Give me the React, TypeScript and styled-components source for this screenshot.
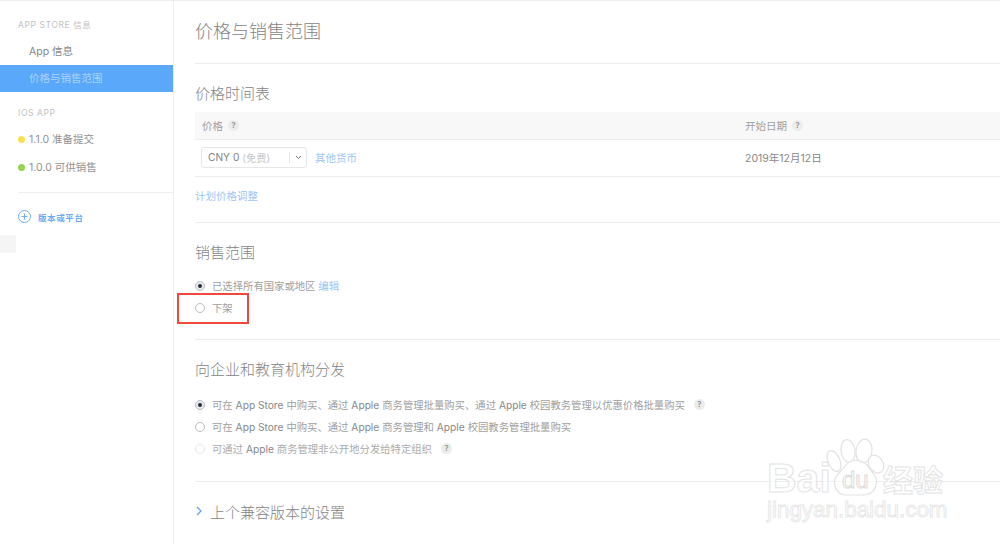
import React from "react";
import styled, { createGlobalStyle } from "styled-components";

const Global = createGlobalStyle`
  html, body { margin: 0; padding: 0; background: #fff; }
  body { font-family: "Inter", "Noto Sans CJK SC", sans-serif; }
  * { box-sizing: border-box; }
`;

const Page = styled.div`
  position: relative;
  width: 1000px;
  height: 544px;
  overflow: hidden;
  display: flex;
  background: #fff;
  border-top: 1px solid #eeeeee;
`;

const TopMark = styled.div`
  position: absolute;
  top: -1px;
  left: 18px;
  width: 50px;
  height: 1px;
  background: #8a8a8a;
`;

const Sidebar = styled.aside`
  position: relative;
  width: 174px;
  flex: none;
  border-right: 1px solid #efefef;
  padding-top: 18px;
`;

const SideLabel = styled.div`
  padding-left: 18px;
  font-size: 8.5px;
  line-height: 12px;
  letter-spacing: 0.6px;
  color: #c2c2c2;
`;

const SideItem = styled.div<{ $active?: boolean }>`
  height: 27px;
  padding: 0 0 2px 29px;
  display: flex;
  align-items: center;
  font-size: 10.5px;
  color: ${(p) => (p.$active ? "#a9d2fd" : "#858585")};
  background: ${(p) => (p.$active ? "#5aa8fa" : "transparent")};
`;

const InfoList = styled.div`
  margin-top: 7px;
  margin-bottom: 15px;
`;

const VersionList = styled.div`
  margin-top: 6px;
`;

const VersionItem = styled.div`
  height: 28px;
  padding: 0 0 2px 18px;
  display: flex;
  align-items: center;
  gap: 4px;
  font-size: 10.5px;
  color: #929292;
`;

const Dot = styled.span<{ $color: string }>`
  width: 7px;
  height: 7px;
  margin-top: 2px;
  border-radius: 50%;
  background: ${(p) => p.$color};
`;

const SideRule = styled.div`
  margin: 11px 0 0 18px;
  height: 1px;
  background: #eeeeee;
`;

const AddRow = styled.div`
  margin: 17px 0 0 18px;
  display: flex;
  align-items: center;
  gap: 7px;
  font-size: 8.5px;
  font-weight: 700;
  letter-spacing: 0.6px;
  color: #6aaaf2;
`;

const Smudge = styled.div`
  position: absolute;
  left: 0;
  top: 234px;
  width: 16px;
  height: 18px;
  background: #f5f5f5;
`;

const Main = styled.main`
  flex: 1;
  padding-left: 21px;
  min-width: 0;
`;

const Title = styled.h1`
  margin: 0;
  height: 63px;
  padding-bottom: 5px;
  display: flex;
  align-items: center;
  font-size: 18px;
  font-weight: 300;
  color: #848484;
  border-bottom: 1px solid #ececec;
`;

const Section = styled.section<{ $height: number }>`
  height: ${(p) => p.$height}px;
  border-bottom: 1px solid #ececec;
`;

const Heading = styled.h2<{ $top: number }>`
  margin: 0;
  padding-top: ${(p) => p.$top}px;
  font-size: 15px;
  line-height: 22px;
  font-weight: 300;
  color: #848484;
`;

const TableHead = styled.div`
  margin-top: 7px;
  height: 28px;
  display: grid;
  grid-template-columns: 543px 1fr;
  align-items: center;
  padding-left: 7px;
  font-size: 10.5px;
  color: #a0a0a0;
  background: #f8f8f8;
  border-bottom: 1px solid #ececec;
`;

const HeadCell = styled.div`
  display: flex;
  align-items: center;
  gap: 5px;
`;

const Help = styled.span`
  width: 11px;
  height: 11px;
  border-radius: 50%;
  background: #ececec;
  color: #909090;
  font-size: 7.5px;
  font-weight: 600;
  display: inline-flex;
  align-items: center;
  justify-content: center;
`;

const TableRow = styled.div`
  height: 37px;
  padding: 0 0 2px 6px;
  display: grid;
  grid-template-columns: 544px 1fr;
  align-items: center;
  font-size: 10.5px;
  color: #888888;
  border-bottom: 1px solid #ececec;
`;

const PriceCell = styled.div`
  display: flex;
  align-items: center;
  gap: 8px;
`;

const Select = styled.div`
  width: 106px;
  height: 21px;
  border: 1px solid #e6e6e6;
  border-radius: 3px;
  display: flex;
  align-items: center;
  padding-left: 6px;
  font-size: 10.2px;
  color: #858585;
`;

const Muted = styled.span`
  color: #c6c6c6;
  margin-left: 3px;
`;

const Caret = styled.span`
  margin-left: auto;
  width: 17px;
  height: 11px;
  border-left: 1px solid #e6e6e6;
  display: flex;
  align-items: center;
  justify-content: center;
`;

const Link = styled.a`
  font-size: 10.5px;
  color: #9cc6f5;
`;

const ScheduleLink = styled(Link)`
  display: block;
  margin-top: 11px;
`;

const RadioList = styled.div<{ $top: number }>`
  margin-top: ${(p) => p.$top}px;
  display: flex;
  flex-direction: column;
  gap: 6px;
`;

const RadioRow = styled.div<{ $faint?: boolean }>`
  height: 16px;
  display: flex;
  align-items: center;
  gap: 7px;
  font-size: 10.35px;
  color: ${(p) => (p.$faint ? "#ababab" : "#a0a0a0")};
`;

const Latin = styled.span`
  font-size: 10.2px;
  color: #888888;
`;

const Radio = styled.span<{ $on?: boolean; $faint?: boolean }>`
  width: 10px;
  height: 10px;
  margin-top: 2px;
  border-radius: 50%;
  flex: none;
  border: 1px solid ${(p) => (p.$faint ? "#e6e6e6" : "#bcbcbc")};
  background: ${(p) => (p.$on ? "#e4ebf5" : "#fff")};
  display: inline-flex;
  align-items: center;
  justify-content: center;
  &::after {
    content: "";
    display: ${(p) => (p.$on ? "block" : "none")};
    width: 4px;
    height: 4px;
    border-radius: 50%;
    background: #2a2a2a;
  }
`;

const HelpGap = styled(Help)`
  margin-left: 2px;
`;

const Disclosure = styled.div`
  height: 58px;
  padding-left: 1px;
  display: flex;
  align-items: center;
  gap: 8px;
  font-size: 15px;
  font-weight: 300;
  color: #848484;
`;

const Highlight = styled.div`
  position: absolute;
  left: 177px;
  top: 292px;
  width: 72px;
  height: 31px;
  border: 2px solid #f0483c;
`;

const Watermark = styled.div`
  position: absolute;
  left: 767px;
  top: 435px;
  width: 185px;
  height: 90px;
  pointer-events: none;
`;

const Paw = styled.svg`
  position: absolute;
  left: 0;
  top: 0;
`;

const BaiText = styled.span`
  position: absolute;
  left: 0;
  top: 20px;
  font-family: "Liberation Sans", sans-serif;
  font-size: 41px;
  line-height: 44px;
  font-weight: 700;
  color: rgba(255, 255, 255, 0.6);
  -webkit-text-stroke: 1px #e4e4e4;
`;

const DuText = styled.span`
  position: absolute;
  left: 75px;
  top: 32px;
  font-family: "Liberation Sans", sans-serif;
  font-size: 24px;
  line-height: 24px;
  color: rgba(255, 255, 255, 0.6);
  -webkit-text-stroke: 1px #dcdcdc;
`;

const JingText = styled.span`
  position: absolute;
  left: 116px;
  top: 22px;
  font-family: "Noto Sans CJK SC", sans-serif;
  font-size: 30px;
  line-height: 40px;
  font-weight: 700;
  white-space: nowrap;
  color: rgba(255, 255, 255, 0.6);
  -webkit-text-stroke: 1px #e4e4e4;
`;

const UrlText = styled.span`
  position: absolute;
  left: 0;
  top: 60px;
  font-family: "Liberation Sans", sans-serif;
  font-size: 22.4px;
  line-height: 28px;
  white-space: nowrap;
  color: rgba(255, 255, 255, 0.6);
  -webkit-text-stroke: 1px #e8e8e8;
`;

const Chevron = () => (
  <svg width="7" height="5" viewBox="0 0 7 5" fill="none">
    <path d="M1 1l2.5 2.5L6 1" stroke="#777" strokeWidth="1" />
  </svg>
);

export default function App() {
  return (
    <>
      <Global />
      <Page>
        <TopMark />
        <Sidebar>
          <SideLabel>APP STORE 信息</SideLabel>
          <InfoList>
            <SideItem>App 信息</SideItem>
            <SideItem $active>价格与销售范围</SideItem>
          </InfoList>
          <SideLabel>IOS APP</SideLabel>
          <VersionList>
            <VersionItem><Dot $color="#f9e150" />1.1.0 准备提交</VersionItem>
            <VersionItem><Dot $color="#96d44e" />1.0.0 可供销售</VersionItem>
          </VersionList>
          <SideRule />
          <AddRow>
            <svg width="13" height="13" viewBox="0 0 13 13" fill="none">
              <circle cx="6.5" cy="6.5" r="6" stroke="#6aaef5" />
              <path d="M3.5 6.5h6M6.5 3.5v6" stroke="#6aaef5" />
            </svg>
            版本或平台
          </AddRow>
          <Smudge />
        </Sidebar>
        <Main>
          <Title>价格与销售范围</Title>
          <Section $height={159}>
            <Heading $top={19}>价格时间表</Heading>
            <TableHead>
              <HeadCell>价格 <Help>?</Help></HeadCell>
              <HeadCell>开始日期 <Help>?</Help></HeadCell>
            </TableHead>
            <TableRow>
              <PriceCell>
                <Select>
                  CNY 0<Muted>(免费)</Muted>
                  <Caret><Chevron /></Caret>
                </Select>
                <Link>其他货币</Link>
              </PriceCell>
              <div>2019年12月12日</div>
            </TableRow>
            <ScheduleLink>计划价格调整</ScheduleLink>
          </Section>
          <Section $height={117}>
            <Heading $top={19}>销售范围</Heading>
            <RadioList $top={13}>
              <RadioRow><Radio $on /><span>已选择所有国家或地区 <Link>编辑</Link></span></RadioRow>
              <RadioRow><Radio />下架</RadioRow>
            </RadioList>
          </Section>
          <Section $height={142}>
            <Heading $top={19}>向企业和教育机构分发</Heading>
            <RadioList $top={15}>
              <RadioRow>
                <Radio $on />
                <span>可在 <Latin>App Store</Latin> 中购买、通过 <Latin>Apple</Latin> 商务管理批量购买、通过 <Latin>Apple</Latin> 校园教务管理以优惠价格批量购买</span>
                <HelpGap>?</HelpGap>
              </RadioRow>
              <RadioRow>
                <Radio />
                <span>可在 <Latin>App Store</Latin> 中购买、通过 <Latin>Apple</Latin> 商务管理和 <Latin>Apple</Latin> 校园教务管理批量购买</span>
              </RadioRow>
              <RadioRow $faint>
                <Radio $faint />
                <span>可通过 <Latin>Apple</Latin> 商务管理非公开地分发给特定组织</span>
                <HelpGap>?</HelpGap>
              </RadioRow>
            </RadioList>
          </Section>
          <Disclosure>
            <svg width="6" height="10" viewBox="0 0 6 10" fill="none">
              <path d="M1 1l4 4-4 4" stroke="#5a9ff0" strokeWidth="1.2" />
            </svg>
            上个兼容版本的设置
          </Disclosure>
        </Main>
        <Highlight />
        <Watermark>
          <BaiText>Bai</BaiText>
          <Paw width="120" height="64" viewBox="0 0 120 64" fill="rgba(255,255,255,0.6)" stroke="#e2e2e2" strokeWidth="1.2">
            <ellipse cx="81" cy="15" rx="7" ry="11.5" transform="rotate(-8 81 15)" />
            <ellipse cx="97" cy="15" rx="8" ry="12" transform="rotate(8 97 15)" />
            <ellipse cx="67" cy="25" rx="6" ry="11" transform="rotate(-22 67 25)" />
            <ellipse cx="109" cy="28" rx="7" ry="9.5" transform="rotate(-32 109 28)" />
            <path d="M89 24c9 0 12 7 17 13 7 8 3 22-10 22H80c-12 0-16-13-9-21 6-5 9-14 18-14z" />
          </Paw>
          <DuText>du</DuText>
          <JingText>经验</JingText>
          <UrlText>jingyan.baidu.com</UrlText>
        </Watermark>
      </Page>
    </>
  );
}
